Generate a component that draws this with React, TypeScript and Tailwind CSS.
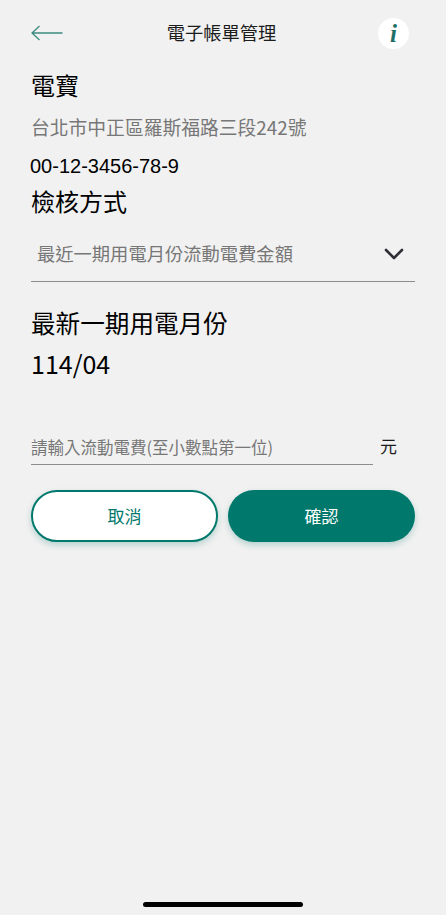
export default function App() {
  const font = { fontFamily: '"Noto Sans CJK TC", sans-serif' };
  return (
    <div style={font} className="w-[446px] h-[915px] bg-[#f1f1f1] flex flex-col relative overflow-hidden">
      <header className="h-[66px] pl-[31px] pr-[37px] flex items-center justify-between">
        <svg width="32" height="16" viewBox="0 0 32 16" fill="none" stroke="#3d8b80" strokeWidth="1.3">
          <path d="M31.5 8H1M8.5 1L1 8l7.5 7" />
        </svg>
        <span className="ml-[2px] text-[18.3px] text-[#1c1c1c]">電子帳單管理</span>
        <div className="w-[31px] h-[31px] rounded-full bg-white flex items-center justify-center">
          <span style={{ fontFamily: '"Liberation Serif", serif' }} className="text-[25px] font-bold italic text-[#1f6f66] leading-none">i</span>
        </div>
      </header>
      <main className="flex flex-col pl-[31px] pr-[31px]">
        <h1 className="text-[24px] leading-[30px] mt-[4px] text-black font-normal">電寶</h1>
        <p className="text-[18.8px] leading-[24px] mt-[15px] text-[#777777]">台北市中正區羅斯福路三段242號</p>
        <p className="text-[20px] leading-[24px] mt-[15px] -ml-px text-black" style={{ fontFamily: '"Liberation Sans", sans-serif' }}>00-12-3456-78-9</p>
        <h2 className="text-[24px] leading-[30px] mt-[8px] text-black font-normal">檢核方式</h2>
        <div className="mt-[14px] h-[52px] border-b-[1.5px] border-[#8d8d8d] flex items-center justify-between pl-[6px] pr-[11px] pb-[4px]">
          <span className="text-[18.3px] text-[#777777]">最近一期用電月份流動電費金額</span>
          <svg width="20" height="12" viewBox="0 0 20 12" fill="none" stroke="#2f2f38" strokeWidth="2.6" strokeLinecap="round" strokeLinejoin="round">
            <path d="M2 2l8 8 8-8" />
          </svg>
        </div>
        <h2 className="text-[24.6px] leading-[30px] mt-[25px] text-black font-normal">最新一期用電月份</h2>
        <p className="text-[25px] leading-[30px] mt-[11px] text-black">114/04</p>
        <div className="mt-[51px] flex items-end">
          <div className="w-[342px] h-[34px] border-b-[1.5px] border-[#8d8d8d] flex items-center">
            <span className="text-[16.5px] text-[#777777]">請輸入流動電費(至小數點第一位)</span>
          </div>
          <span className="ml-[7px] pb-[2px] text-[17px] leading-[34px] text-[#1c1c1c]">元</span>
        </div>
        <div className="mt-[25px] flex gap-[10px] w-[384px]">
          <button className="w-[187px] h-[52px] rounded-[26px] bg-white border-2 border-[#00786c] text-[17px] text-[#00786c] shadow-[0_3px_6px_rgba(0,120,108,0.25)]">取消</button>
          <button className="w-[187px] h-[52px] rounded-[26px] bg-[#00786c] text-[17px] text-white shadow-[0_3px_6px_rgba(0,120,108,0.25)]">確認</button>
        </div>
      </main>
      <div className="absolute bottom-[8px] left-[143px] w-[160px] h-[5px] rounded-full bg-black" />
    </div>
  );
}
